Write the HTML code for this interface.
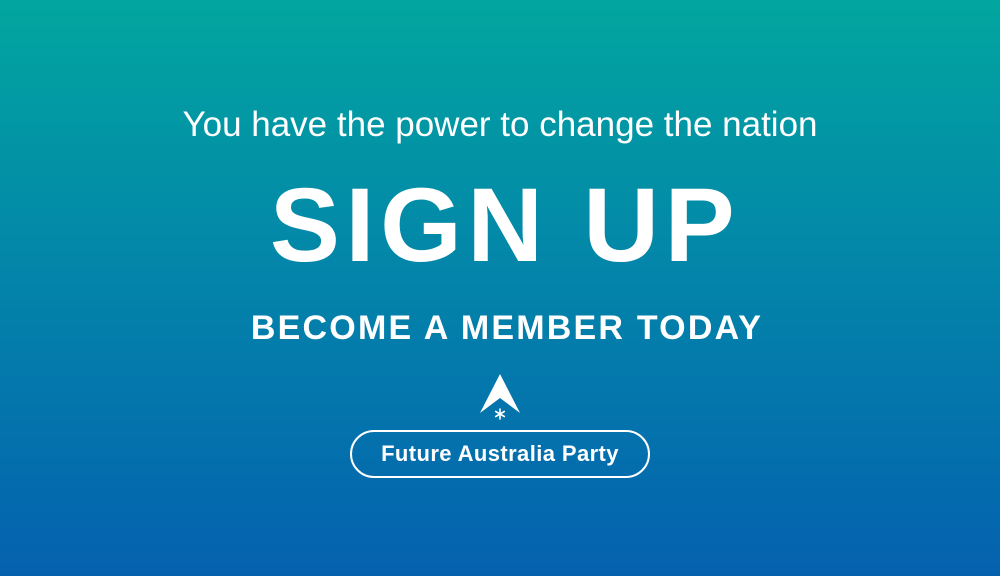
<!DOCTYPE html>
<html><head><style>
html,body{margin:0;padding:0}
body{width:1000px;height:576px;overflow:hidden;background:linear-gradient(180deg,#02a6a0 0%,#0383aa 50%,#0561af 100%);font-family:"Liberation Sans",sans-serif;color:#fff;position:relative}
.t{position:absolute;left:0;width:1000px;text-align:center;white-space:nowrap}
.a{top:105px;font-size:35px;font-weight:300;letter-spacing:0px}
.b{top:161px;left:5px;font-size:105px;font-weight:bold;letter-spacing:5.5px;line-height:130px}
.c{top:305px;left:7px;font-size:34px;font-weight:bold;letter-spacing:2.2px;line-height:46px}
.btn{position:absolute;left:350px;top:430px;width:296px;height:44px;border:2.5px solid #fff;border-radius:24px;text-align:center;line-height:44px;font-size:22px;font-weight:bold;letter-spacing:0.4px}
</style></head><body>
<div class="t a">You have the power to change the nation</div>
<div class="t b">SIGN UP</div>
<div class="t c">BECOME A MEMBER TODAY</div>
<svg style="position:absolute;left:470px;top:368px" width="60" height="60" viewBox="470 368 60 60">
<path d="M500 374 L520 413 L500 398 L480 413 Z" fill="#fff"/>
<g stroke="#fff" stroke-width="1.6" stroke-linecap="round">
<line x1="500" y1="409" x2="500" y2="419"/>
<line x1="495.7" y1="411.5" x2="504.3" y2="416.5"/>
<line x1="495.7" y1="416.5" x2="504.3" y2="411.5"/>
</g>
</svg>
<div class="btn">Future Australia Party</div>
</body></html>
